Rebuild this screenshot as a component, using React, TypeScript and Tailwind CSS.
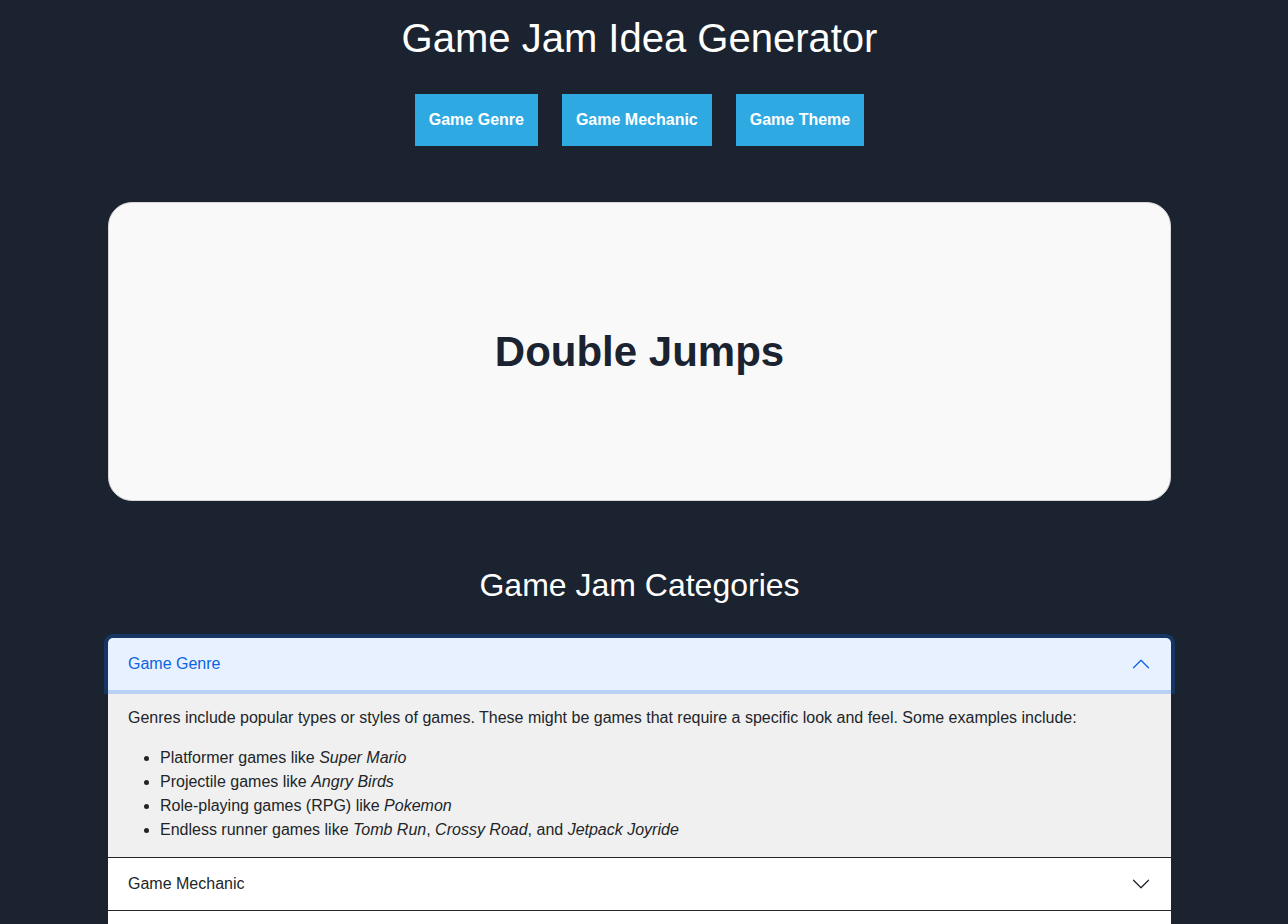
const ideaButtons = ['Game Genre', 'Game Mechanic', 'Game Theme']

function Chevron({ up = false }: { up?: boolean }) {
  return (
    <svg
      viewBox="0 0 16 16"
      className={up ? 'h-5 w-5 rotate-180' : 'h-5 w-5'}
      fill="none"
      stroke="currentColor"
      strokeWidth={1}
      strokeLinecap="round"
      strokeLinejoin="round"
    >
      <path d="M2 5L8 11L14 5" />
    </svg>
  )
}

export default function App() {
  return (
    <div
      className="min-h-screen bg-[#1a232f] pr-[9px] text-[#212529]"
      style={{ fontFamily: '"Liberation Sans", Arial, sans-serif' }}
    >
      <div className="flex flex-col items-center">
        <h1 className="pt-[14px] text-[40px] leading-[48px] text-white">Game Jam Idea Generator</h1>

        <div className="mt-[32px] flex gap-6">
          {ideaButtons.map((label) => (
            <button
              key={label}
              className="h-[52px] bg-[#2fa9e1] px-[14px] text-base font-bold text-white"
            >
              {label}
            </button>
          ))}
        </div>

        <div className="mt-[56px] flex h-[299px] w-[1063px] items-center justify-center rounded-3xl border border-[#d6d6d6] bg-[#f9f9f9]">
          <h2 className="text-[42px] font-bold text-[#1a232f]">Double Jumps</h2>
        </div>

        <h2 className="mt-[64px] text-[32px] leading-[40px] text-white">Game Jam Categories</h2>

        <div className="mt-[33px] w-[1063px]">
          <div className="relative z-10 flex h-[52px] items-center justify-between rounded-t-[5px] bg-[#e7f1ff] px-5 text-[#0c63e4] ring-4 ring-[rgba(13,110,253,0.25)]">
            <span className="text-base">Game Genre</span>
            <Chevron up />
          </div>
          <div className="bg-[#f0f0f0] px-5 pb-[15px] pt-4 text-base leading-6">
            <p className="mb-4">
              Genres include popular types or styles of games. These might be games that require a specific look and feel. Some examples include:
            </p>
            <ul className="list-disc pl-8">
              <li>
                Platformer games like <em>Super Mario</em>
              </li>
              <li>
                Projectile games like <em>Angry Birds</em>
              </li>
              <li>
                Role-playing games (RPG) like <em>Pokemon</em>
              </li>
              <li>
                Endless runner games like <em>Tomb Run</em>, <em>Crossy Road</em>, and <em>Jetpack Joyride</em>
              </li>
            </ul>
          </div>
          <div className="flex h-[54px] items-center justify-between border-y border-[#212529] bg-white px-5">
            <span className="text-base">Game Mechanic</span>
            <Chevron />
          </div>
          <div className="flex h-[52px] items-center justify-between bg-white px-5">
            <span className="text-base">Game Theme</span>
            <Chevron />
          </div>
        </div>
      </div>
    </div>
  )
}
